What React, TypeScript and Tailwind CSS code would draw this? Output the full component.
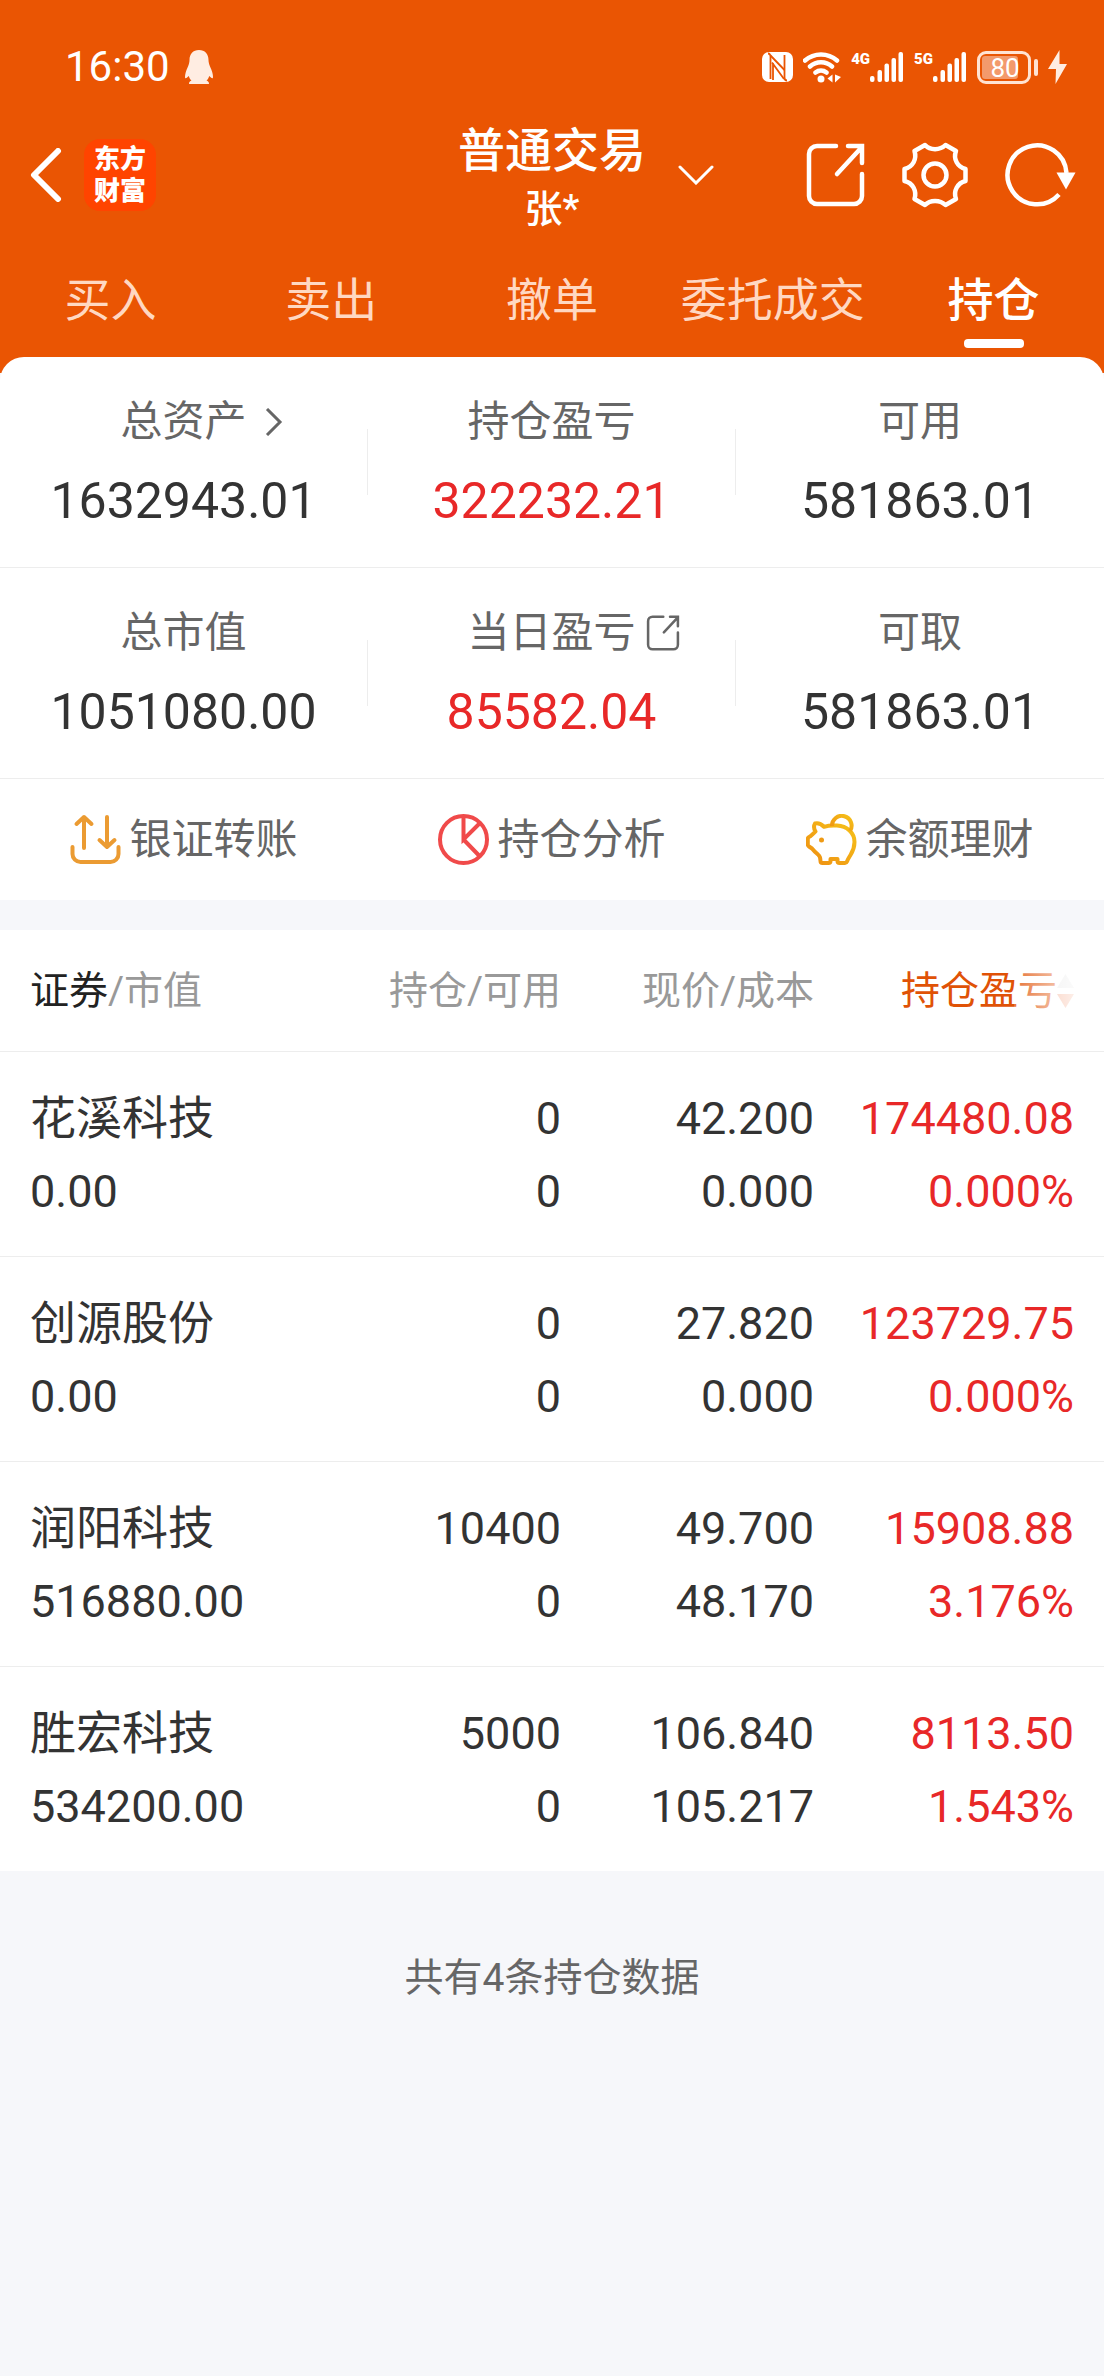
import type { ReactNode } from "react";

type Stat = {
  label: string;
  value: string;
  up?: boolean;
  icon?: ReactNode;
};

type Holding = {
  name: string;
  marketValue: string;
  amount: string;
  available: string;
  price: string;
  cost: string;
  profit: string;
  percent: string;
};

const tabs = ["买入", "卖出", "撤单", "委托成交", "持仓"];

const holdings: Holding[] = [
  {
    name: "花溪科技",
    marketValue: "0.00",
    amount: "0",
    available: "0",
    price: "42.200",
    cost: "0.000",
    profit: "174480.08",
    percent: "0.000%",
  },
  {
    name: "创源股份",
    marketValue: "0.00",
    amount: "0",
    available: "0",
    price: "27.820",
    cost: "0.000",
    profit: "123729.75",
    percent: "0.000%",
  },
  {
    name: "润阳科技",
    marketValue: "516880.00",
    amount: "10400",
    available: "0",
    price: "49.700",
    cost: "48.170",
    profit: "15908.88",
    percent: "3.176%",
  },
  {
    name: "胜宏科技",
    marketValue: "534200.00",
    amount: "5000",
    available: "0",
    price: "106.840",
    cost: "105.217",
    profit: "8113.50",
    percent: "1.543%",
  },
];

function ShareIcon({ className }: { className: string }) {
  return (
    <svg
      viewBox="0 0 59 64"
      className={className}
      fill="none"
      stroke="currentColor"
      strokeWidth="4.5"
      strokeLinecap="round"
    >
      <path d="M30 3H11a8 8 0 0 0-8 8v42a8 8 0 0 0 8 8h37a8 8 0 0 0 8-8V31" />
      <path d="M31 31 55 5M42 3h14v17" />
    </svg>
  );
}

function Signal({ label }: { label: string }) {
  return (
    <div className="flex items-start">
      <span className="text-[15px] leading-4 font-black">{label}</span>
      <svg viewBox="0 0 34 32" className="h-8 w-[34px]" fill="currentColor">
        <rect x="0" y="25" width="4.5" height="6" rx="2" />
        <rect x="7.5" y="19" width="4.5" height="12" rx="2" />
        <rect x="14.5" y="12.5" width="4.5" height="18.5" rx="2" />
        <rect x="21.5" y="7" width="4.5" height="24" rx="2" />
        <rect x="28.5" y="1" width="4.5" height="30" rx="2" />
      </svg>
    </div>
  );
}

function StatusBar() {
  return (
    <div className="flex h-[120px] items-center justify-between pt-[14px] pr-[37px] pl-[65px]">
      <div className="flex items-center gap-[15px]">
        <span className="text-[42px] leading-none">16:30</span>
        <svg viewBox="0 0 28 34" className="h-[34px] w-7" fill="#ffede2">
          <path d="M14 0C8 0 4.5 4 4.5 10c0 2-.5 4-1.5 6.500C1 20.500 0 24 0 27c0 1.500.8 1.600 1.800.8l2-1.800c.6 2 1.500 3.500 2.700 4.600C5 31.200 4 32 4 34h20c0-2-1-2.800-2.500-3.400 1.200-1.100 2.100-2.600 2.700-4.600l2 1.800c1 .8 1.800.7 1.800-.8 0-3-1-6.500-3-10.500-1-2.500-1.500-4.500-1.500-6.500C23.500 4 20 0 14 0Z" />
        </svg>
      </div>

      <div className="flex items-center gap-[10px]">
        <svg viewBox="0 0 31 30" className="h-[30px] w-[31px]">
          <rect width="31" height="30" rx="7" fill="#fff" />
          <path
            d="M8.500 27V4.500C8.500 2.500 7.500 1.500 6 1.500M22.500 3v22.500c0 2 1 3 2.500 3"
            fill="none"
            stroke="#ea5503"
            strokeWidth="1.800"
          />
          <path
            d="M8.500 3.500 22.500 18M10 10.500 22 27M11 11v17"
            fill="none"
            stroke="#ea5503"
            strokeWidth="1.800"
          />
        </svg>
        <svg
          viewBox="0 0 38 32"
          className="h-8 w-[38px]"
          fill="none"
          stroke="#fff"
          strokeWidth="4.5"
          strokeLinecap="round"
        >
          <path d="M2 9.500a24 24 0 0 1 32 0M7 15.500a16.500 16.500 0 0 1 22 0M12.500 21.500a9 9 0 0 1 11 0" />
          <circle cx="18" cy="28" r="3.5" fill="#fff" stroke="none" />
          <path
            d="M29.500 23.500v8l-5-4ZM32 23.500v8l6-5.500Z"
            fill="#fff"
            stroke="none"
          />
        </svg>
        <Signal label="4G" />
        <Signal label="5G" />
        <div className="flex items-center gap-[3px]">
          <div className="flex h-[33px] w-[54px] items-center rounded-[9px] border-3 border-[#ffe3d3] p-[2px]">
            <div className="flex h-full w-9 justify-center rounded-[3px] bg-[#f39a6c]">
              <span className="pl-[10px] text-[26px] leading-[24px]">80</span>
            </div>
          </div>
          <span className="h-[17px] w-1 rounded-full bg-[#ffe3d3]" />
        </div>
        <svg viewBox="0 0 19 34" className="h-[34px] w-[19px]" fill="#ffede2">
          <path d="M11.500 0 0 19h8L7.500 34 19 14h-7.500Z" />
        </svg>
      </div>
    </div>
  );
}

function NavBar() {
  return (
    <div className="grid grid-cols-[1fr_auto_1fr] items-center">
      <div className="flex items-center gap-[22px] pb-[6px] pl-[30px]">
        <button type="button" aria-label="返回">
          <svg
            viewBox="0 0 32 54"
            className="h-[54px] w-8"
            fill="none"
            stroke="#fff"
            strokeWidth="6"
            strokeLinecap="round"
            strokeLinejoin="round"
          >
            <path d="M28 3 4 27l24 24" />
          </svg>
        </button>
        <div className="flex size-[72px] flex-col items-center justify-center rounded-2xl bg-[#ff4400] text-[26px] leading-8 font-black">
          <span>东方</span>
          <span>财富</span>
        </div>
      </div>

      <div className="text-center">
        <h1 className="text-[47px] leading-[62px] font-medium">普通交易</h1>
        <p className="text-[38px] leading-[54px] font-medium">张*</p>
      </div>

      <div className="flex items-center justify-between pr-7 pb-[6px] pl-8">
        <button type="button" aria-label="切换账户">
          <svg
            viewBox="0 0 36 20"
            className="h-5 w-9"
            fill="none"
            stroke="#fff"
            strokeWidth="3"
            strokeLinecap="round"
          >
            <path d="m2 2 16 16L34 2" />
          </svg>
        </button>
        <div className="flex items-center gap-[37px]">
          <button type="button" aria-label="分享">
            <ShareIcon className="h-16 w-[59px]" />
          </button>
          <button type="button" aria-label="设置">
            <svg
              viewBox="0 0 66 66"
              className="size-[66px]"
              fill="none"
              stroke="#fff"
              strokeWidth="4.5"
              strokeLinejoin="round"
            >
              <path d="M23 3C28 8.500 38 8.500 43.500 3L54 9C51 17 55.500 25 63.500 27v12C55.500 41 51 49 54 57l-10.500 6C38 57.500 28 57.500 23 63l-10.500-6C15 49 11 41 2.500 39V27C11 25 15 17 12.500 9Z" />
              <circle cx="33" cy="33" r="11.5" />
            </svg>
          </button>
          <button type="button" aria-label="刷新">
            <svg viewBox="0 0 71 66" className="h-[66px] w-[71px]">
              <path
                d="M54 52.500A29.500 29.500 0 1 1 61.500 31"
                fill="none"
                stroke="#fff"
                strokeWidth="4.5"
              />
              <path d="M51.500 30.500h19l-9.500 17Z" fill="#fff" />
            </svg>
          </button>
        </div>
      </div>
    </div>
  );
}

function StatRow({ stats }: { stats: Stat[] }) {
  return (
    <div className="grid grid-cols-3 border-b border-[#ededed]">
      {stats.map((stat) => (
        <div key={stat.label} className="group flex items-center">
          <div className="flex-1 pt-10 pb-9">
            <div className="grid grid-cols-[1fr_auto_1fr] items-center text-[42px] leading-[50px] text-[#666]">
              <span />
              <span>{stat.label}</span>
              {stat.icon}
            </div>
            <p
              className={`mt-6 text-center text-[50px] leading-[60px] ${
                stat.up ? "text-[#e82828]" : "text-[#333]"
              }`}
            >
              {stat.value}
            </p>
          </div>
          <span className="h-[66px] w-px bg-[#ededed] group-last:hidden" />
        </div>
      ))}
    </div>
  );
}

function Action({ label, children }: { label: string; children: ReactNode }) {
  return (
    <button
      type="button"
      className="flex flex-1 items-center justify-center gap-2 text-[42px] leading-[50px] text-[#666]"
    >
      {children}
      <span>{label}</span>
    </button>
  );
}

function Actions() {
  return (
    <div className="flex h-[121px] items-center">
      <Action label="银证转账">
        <svg
          viewBox="0 0 51 51"
          className="size-[51px]"
          fill="none"
          stroke="#eb9b32"
          strokeWidth="4"
          strokeLinecap="round"
          strokeLinejoin="round"
        >
          <path d="M14 34V3M6.500 10 14 3l7.500 7M37 3v30M29.500 26l7.500 7 7.500-7" />
          <path d="M2.500 33v7a8 8 0 0 0 8 8h30a8 8 0 0 0 8-8v-7" />
        </svg>
      </Action>
      <Action label="持仓分析">
        <svg
          viewBox="0 0 51 51"
          className="size-[51px]"
          fill="none"
          stroke="#f04a4a"
          strokeWidth="4"
        >
          <circle cx="25.5" cy="25.5" r="23.5" />
          <path d="M25.500 2v23.500L42 9M25.500 25.500 42 42.500" />
        </svg>
      </Action>
      <Action label="余额理财">
        <svg
          viewBox="0 0 51 51"
          className="size-[51px]"
          fill="none"
          stroke="url(#pig)"
          strokeWidth="4"
          strokeLinejoin="round"
        >
          <defs>
            <linearGradient id="pig" x1="1" y1="0" x2="0" y2="1">
              <stop offset="0" stopColor="#f6c21a" />
              <stop offset="1" stopColor="#ee8f12" />
            </linearGradient>
          </defs>
          <path d="M9 9.500c3-.8 6 .2 9 3.300 4-1.200 8-1.500 13-1.200C41 12 48.500 19 48.500 28c0 5-1.500 9-4 13-1.500 2.500-2.500 4-3.500 6.500-.4 1-1 1.500-2 1.500h-5.500c-1.500 0-2-.8-2-2V45h-7v2c0 1.200-.6 2-2 2h-6c-1.400 0-2-.8-2-2 0-3-.5-5-2.500-6.500C9.500 38.500 8 37 6 34.500l-3-2c-.8-.5-1.200-1-1.200-2V25c0-1 .4-1.600 1.200-2 2.500-1 4-3.500 6.500-5.500C8 15 7.500 12 9 9.500Z" />
          <path d="M26 12A9.800 9.800 0 1 1 44 17" />
          <circle cx="15.5" cy="26" r="2.5" fill="#ef9a14" stroke="none" />
        </svg>
      </Action>
    </div>
  );
}

function HoldingTable() {
  return (
    <table className="w-full table-fixed bg-white text-right text-[45px] leading-[73px] text-[#333]">
      <colgroup>
        <col />
        <col className="w-[231px]" />
        <col className="w-[253px]" />
        <col className="w-[290px]" />
      </colgroup>
      <thead>
        <tr className="h-[121px] border-b border-[#ededed] text-[39px] leading-[50px] text-[#999]">
          <th className="pt-[2px] pl-[30px] text-left font-normal">
            <span className="text-[#222]">证券</span>/市值
          </th>
          <th className="pt-[2px] font-normal">持仓/可用</th>
          <th className="pt-[2px] font-normal">现价/成本</th>
          <th className="pt-[2px] pr-[30px] font-normal">
            <button
              type="button"
              className="relative inline-flex items-center text-[#e05206]"
            >
              <span>持仓盈亏</span>
              <svg viewBox="0 0 17 34" className="h-[34px] w-[17px]">
                <path d="M8.500 0 17 14H0Z" fill="#e8e8e8" />
                <path d="M8.500 34 17 20H0Z" fill="#f5a98a" />
              </svg>
              <span className="absolute inset-y-0 right-0 w-[60px] bg-linear-to-r from-white/20 to-white/80" />
            </button>
          </th>
        </tr>
      </thead>
      <tbody>
        {holdings.map((item) => (
          <tr
            key={item.name}
            className="border-b border-[#ededed] last:border-b-0"
          >
            <td className="pt-[30px] pb-7 pl-[30px] text-left">
              <p className="text-[46px]">{item.name}</p>
              <p>{item.marketValue}</p>
            </td>
            <td className="pt-[30px] pb-7">
              <p>{item.amount}</p>
              <p>{item.available}</p>
            </td>
            <td className="pt-[30px] pb-7">
              <p>{item.price}</p>
              <p>{item.cost}</p>
            </td>
            <td className="pt-[30px] pr-[30px] pb-7 text-[#e82828]">
              <p>{item.profit}</p>
              <p>{item.percent}</p>
            </td>
          </tr>
        ))}
      </tbody>
    </table>
  );
}

export default function App() {
  return (
    <div className="min-h-screen bg-[#f6f7fa] font-['Roboto','Noto_Sans_CJK_SC',sans-serif]">
      <header className="bg-[#ea5503] pb-4 text-white">
        <StatusBar />
        <NavBar />
        <nav className="grid grid-cols-5 pt-[30px] pb-[9px]">
          {tabs.map((tab) => {
            const active = tab === "持仓";
            return (
              <a
                key={tab}
                href="#"
                className={`flex flex-col items-center gap-[5px] text-[46px] leading-[68px] ${
                  active ? "font-medium text-white" : "text-[#ffd8c2]"
                }`}
              >
                {tab}
                <span
                  className={`h-[9px] w-[60px] rounded-[4px] ${active ? "bg-white" : ""}`}
                />
              </a>
            );
          })}
        </nav>
      </header>

      <main>
        <section className="relative -mt-4 rounded-t-3xl bg-white">
          <StatRow
            stats={[
              {
                label: "总资产",
                value: "1632943.01",
                icon: (
                  <svg
                    viewBox="0 0 18 28"
                    className="ml-[18px] h-7 w-[18px]"
                    fill="none"
                    stroke="#666"
                    strokeWidth="3"
                  >
                    <path d="m2 1 13 13L2 27" />
                  </svg>
                ),
              },
              { label: "持仓盈亏", value: "322232.21", up: true },
              { label: "可用", value: "581863.01" },
            ]}
          />
          <StatRow
            stats={[
              { label: "总市值", value: "1051080.00" },
              {
                label: "当日盈亏",
                value: "85582.04",
                up: true,
                icon: <ShareIcon className="ml-[10px] h-9 w-[34px]" />,
              },
              { label: "可取", value: "581863.01" },
            ]}
          />
          <Actions />
        </section>

        <section className="mt-[30px]">
          <HoldingTable />
          <p className="pt-20 text-center text-[39px] leading-[54px] text-[#666]">
            共有4条持仓数据
          </p>
        </section>
      </main>
    </div>
  );
}
